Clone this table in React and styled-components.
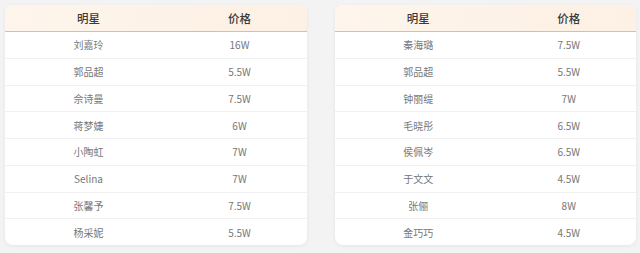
import React from "react";
import styled, { createGlobalStyle } from "styled-components";

const left = [
  ["刘嘉玲", "16W"],
  ["郭品超", "5.5W"],
  ["佘诗曼", "7.5W"],
  ["蒋梦婕", "6W"],
  ["小陶虹", "7W"],
  ["Selina", "7W"],
  ["张馨予", "7.5W"],
  ["杨采妮", "5.5W"],
];

const right = [
  ["秦海璐", "7.5W"],
  ["郭品超", "5.5W"],
  ["钟丽缇", "7W"],
  ["毛晓彤", "6.5W"],
  ["侯佩岑", "6.5W"],
  ["于文文", "4.5W"],
  ["张俪", "8W"],
  ["金巧巧", "4.5W"],
];

const PriceTable = ({ rows }) => (
  <Card>
    <HeadRow>
      <HeadCell>明星</HeadCell>
      <HeadCell>价格</HeadCell>
    </HeadRow>
    {rows.map(([name, price], i) => (
      <Row key={i}>
        <Cell>{name}</Cell>
        <Cell>{price}</Cell>
      </Row>
    ))}
  </Card>
);

const App = () => {
  return (
    <>
      <GlobalStyle />
      <Page>
        <PriceTable rows={left} />
        <PriceTable rows={right} />
      </Page>
    </>
  );
};

export default App;

const GlobalStyle = createGlobalStyle`
  body {
    margin: 0;
    background: #f3f3f3;
    font-family: "Noto Sans CJK SC", "Noto Sans", sans-serif;
  }
`;

const Page = styled.div`
  display: grid;
  grid-template-columns: 302px 301px;
  column-gap: 28px;
  padding: 5px 4px 8px 5px;
  height: 253px;
  box-sizing: border-box;
`;

const Card = styled.div`
  background: #ffffff;
  border-radius: 8px;
  overflow: hidden;
  box-shadow: 0 1px 4px rgba(0, 0, 0, 0.06);
  display: flex;
  flex-direction: column;
`;

const HeadRow = styled.div`
  display: grid;
  grid-template-columns: 1fr 1fr;
  height: 26px;
  background: linear-gradient(90deg, #fef5ec 0%, #fdf0e4 100%);
  border-bottom: 1px solid #d8bf9f;
`;

const HeadCell = styled.div`
  display: flex;
  align-items: center;
  justify-content: center;
  padding-left: 16px;
  font-size: 11.5px;
  font-weight: 500;
  color: #3a3a3a;
`;

const Row = styled.div`
  display: grid;
  grid-template-columns: 1fr 1fr;
  flex: 1;
  border-bottom: 1.5px solid #f1f1f1;

  &:last-child {
    border-bottom: none;
  }
`;

const Cell = styled.div`
  display: flex;
  align-items: center;
  justify-content: center;
  padding-left: 16px;
  font-size: 10px;
  color: #777777;
`;
